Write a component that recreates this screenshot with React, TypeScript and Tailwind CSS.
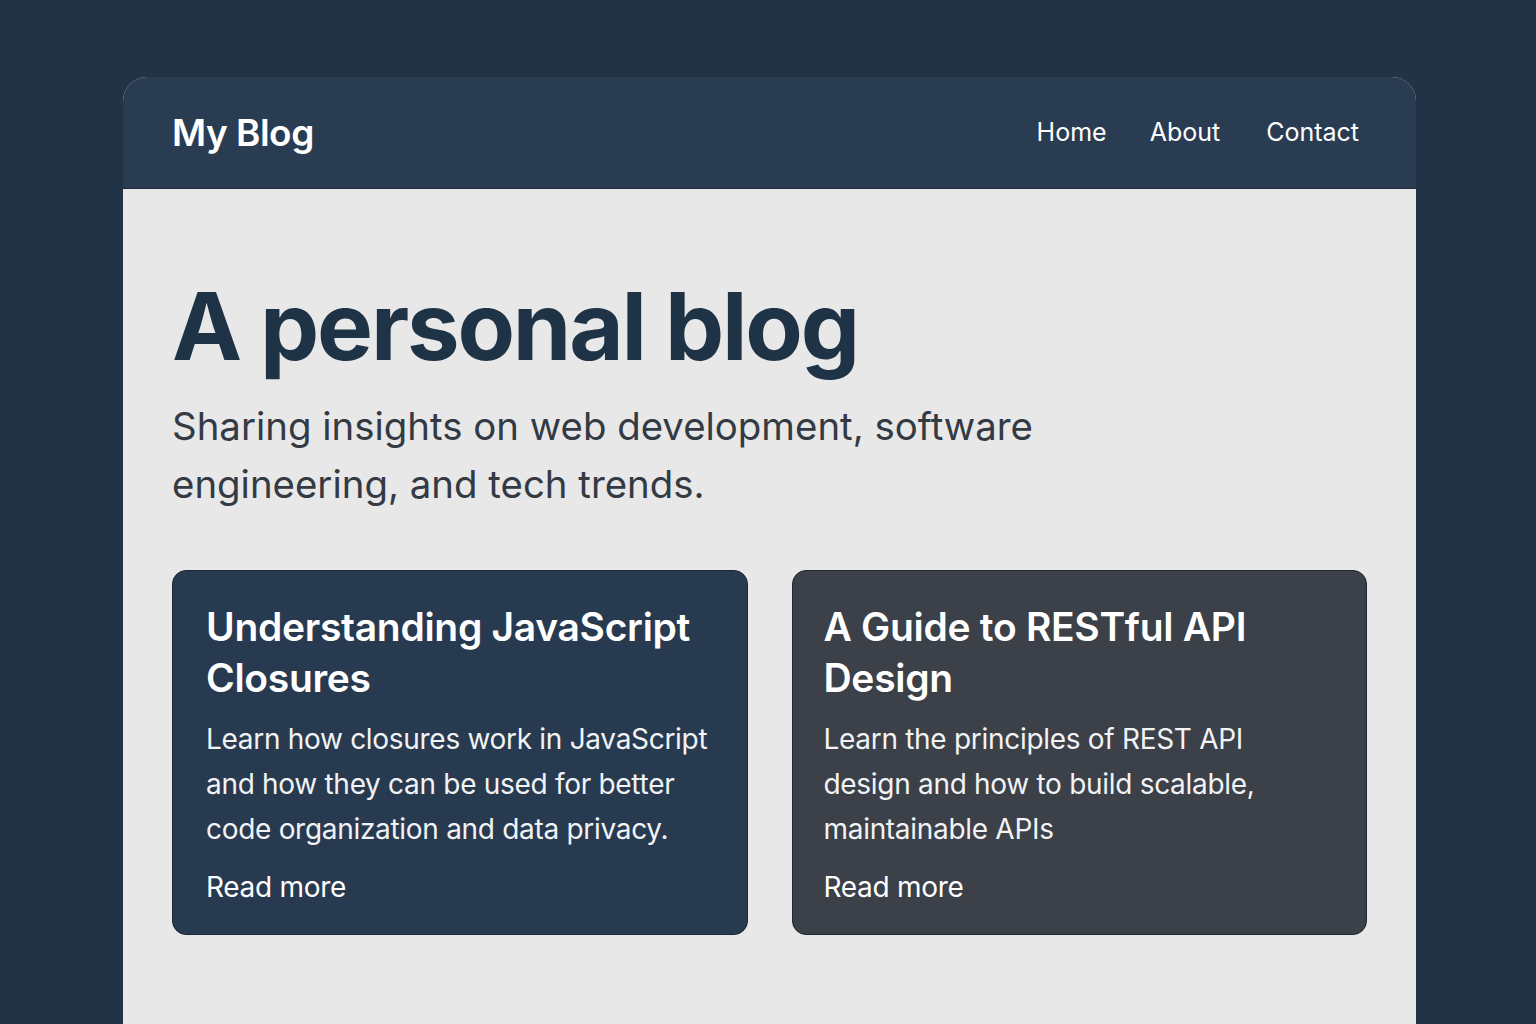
const posts = [
  {
    title: 'Understanding JavaScript Closures',
    excerpt: 'Learn how closures work in JavaScript and how they can be used for better code organization and data privacy.',
    bg: 'bg-[#283a50]',
    pad: 'pl-[33px]',
  },
  {
    title: 'A Guide to RESTful API Design',
    excerpt: 'Learn the principles of REST API design and how to build scalable, maintainable APIs',
    bg: 'bg-[#3b4049]',
    pad: 'pl-[31px]',
  },
];

export default function App() {
  return (
    <div className="min-h-screen h-[1024px] overflow-hidden bg-[#213344] pt-[77px] pl-[123px] pr-[120px] font-['Inter',sans-serif]">
      <div className="h-full rounded-t-[24px] overflow-hidden bg-[#e8e8e8] flex flex-col">
        <header className="h-[112px] shrink-0 bg-[#2a3c52] flex items-center justify-between pl-[49px] pr-[57px] border-b border-[#1c2a3a]">
          <h1 className="text-[37px] font-semibold text-white tracking-[-0.5px]">My Blog</h1>
          <nav className="flex items-center gap-[43px] text-[25px] text-white">
            <a href="#">Home</a>
            <a href="#">About</a>
            <a href="#" className="ml-[3px]">Contact</a>
          </nav>
        </header>

        <main className="pl-[49px] pr-[49px] pt-[86px]">
          <h2 className="text-[94px] leading-[1.1] font-bold text-[#1f3347] tracking-[-2.2px]">A personal blog</h2>
          <p className="mt-[19px] max-w-[880px] text-[38.4px] leading-[58px] text-[#333a44]">
            Sharing insights on web development, software engineering, and tech trends.
          </p>

          <div className="mt-[57px] grid grid-cols-2 gap-[44px]">
            {posts.map((post) => (
              <article
                key={post.title}
                className={`${post.bg} ${post.pad} h-[365px] rounded-[14px] border border-[#1c2836] pr-[34px] pt-[30px] text-white`}
              >
                <h3 className="text-[39px] leading-[51px] font-semibold tracking-[-0.3px]">{post.title}</h3>
                <p className="mt-[14px] text-[28px] leading-[45px] tracking-[-0.3px] text-[#f1f3f5]">{post.excerpt}</p>
                <a href="#" className="block mt-[13px] text-[28px] leading-[45px] tracking-[-0.3px]">Read more</a>
              </article>
            ))}
          </div>
        </main>
      </div>
    </div>
  );
}
